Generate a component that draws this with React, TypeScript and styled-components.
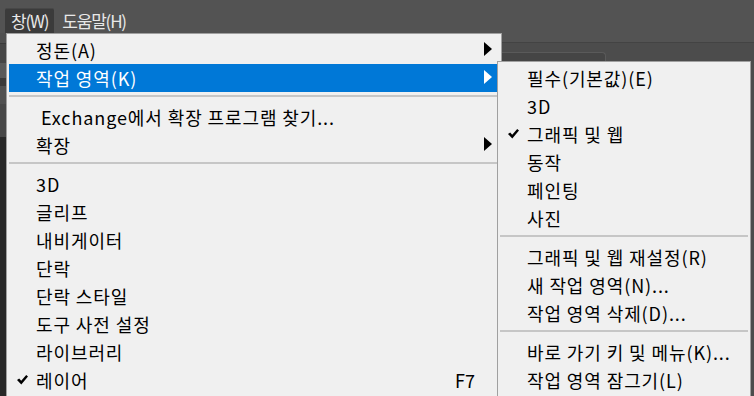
import React from "react";
import styled, { createGlobalStyle } from "styled-components";

const Global = createGlobalStyle`
  html, body { margin: 0; padding: 0; }
  body {
    background: #535353;
    font-family: "Noto Sans CJK KR", "Noto Sans", sans-serif;
    width: 754px;
    height: 396px;
    overflow: hidden;
  }
`;

const Page = styled.div`
  position: relative;
  width: 754px;
  height: 396px;
  display: grid;
  grid-template-rows: 33px 1fr;
  overflow: hidden;
`;

const TopBar = styled.div`
  display: flex;
  align-items: flex-end;
  gap: 2px;
  padding-left: 5px;
  background: #535353;
`;

const TopButton = styled.div<{ $active?: boolean }>`
  height: 25px;
  display: flex;
  align-items: center;
  padding: 0 6px 1px;
  box-sizing: border-box;
  font-size: 17px;
  letter-spacing: -1.2px;
  color: #e8e8e8;
  background: ${(p) => (p.$active ? "#3b3b3b" : "transparent")};
  border-top: 1px solid ${(p) => (p.$active ? "#474747" : "transparent")};
  border-radius: 2px 2px 0 0;
`;

const Workspace = styled.div`
  display: grid;
  grid-template-columns: 6px 1fr;
`;

const LeftStrip = styled.div`
  display: flex;
  flex-direction: column;
`;

const StripBlock = styled.div<{ $h: number; $c: string }>`
  height: ${(p) => p.$h}px;
  background: ${(p) => p.$c};
  flex: ${(p) => (p.$h === 0 ? 1 : "none")};
`;

const MainArea = styled.div`
  display: flex;
  flex-direction: column;
`;

const HeaderBand = styled.div`
  height: 9px;
  background: #535353;
  border-bottom: 1px solid #434343;
`;

const PanelBar = styled.div`
  height: 9px;
  background: #4c4c4c;
`;

const TabRow = styled.div`
  flex: 1;
  background: #4c4c4c;
  padding-left: 488px;
`;

const Tab = styled.div`
  width: 110px;
  height: 40px;
  background: #454545;
  border: 1px solid #5a5a5a;
  border-bottom: none;
  border-radius: 0 4px 0 0;
`;

const Menu = styled.div<{ $left: number; $top: number; $width: number }>`
  position: absolute;
  left: ${(p) => p.$left}px;
  top: ${(p) => p.$top}px;
  width: ${(p) => p.$width}px;
  box-sizing: border-box;
  background: #f0f0f0;
  border: 1px solid #a0a0a0;
  padding: 2px 2px 4px;
`;

const Item = styled.div<{ $active?: boolean }>`
  display: grid;
  grid-template-columns: 27px 1fr auto 17px;
  align-items: center;
  height: 28px;
  padding-right: 7px;
  font-size: 18px;
  letter-spacing: 0.9px;
  white-space: nowrap;
  background: ${(p) => (p.$active ? "#0078d7" : "transparent")};
  color: ${(p) => (p.$active ? "#ffffff" : "#000000")};
`;

const CheckCell = styled.div`
  display: flex;
  align-items: center;
  padding-left: 8px;
  height: 100%;
`;

const Label = styled.span`
  line-height: 28px;
`;

const Shortcut = styled.span`
  line-height: 28px;
  letter-spacing: 0;
`;

const ArrowCell = styled.div`
  display: flex;
  justify-content: flex-end;
  align-items: center;
  padding-bottom: 3px;
  height: 100%;
  box-sizing: border-box;
`;

const Separator = styled.div`
  height: 2px;
  margin: 3px 0 6px;
  background: #c6c6c6;
`;

const Check = () => (
  <svg width="11" height="10" viewBox="0 0 11 10">
    <polygon points="0,5 2.2,3.4 4.2,5.8 9.2,0 11,1.4 4.3,9.6" fill="#000" />
  </svg>
);

const Arrow = ({ color }: { color: string }) => (
  <svg width="8" height="14" viewBox="0 0 8 14">
    <polygon points="0,0 8,7 0,14" fill={color} />
  </svg>
);

type Entry =
  | { sep: true }
  | {
      sep?: false;
      label: string;
      checked?: boolean;
      sub?: boolean;
      active?: boolean;
      shortcut?: string;
    };

const mainItems: Entry[] = [
  { label: "정돈(A)", sub: true },
  { label: "작업 영역(K)", sub: true, active: true },
  { sep: true },
  { label: "\u00a0Exchange에서 확장 프로그램 찾기..." },
  { label: "확장", sub: true },
  { sep: true },
  { label: "3D" },
  { label: "글리프" },
  { label: "내비게이터" },
  { label: "단락" },
  { label: "단락 스타일" },
  { label: "도구 사전 설정" },
  { label: "라이브러리" },
  { label: "레이어", checked: true, shortcut: "F7" },
];

const subItems: Entry[] = [
  { label: "필수(기본값)(E)" },
  { label: "3D" },
  { label: "그래픽 및 웹", checked: true },
  { label: "동작" },
  { label: "페인팅" },
  { label: "사진" },
  { sep: true },
  { label: "그래픽 및 웹 재설정(R)" },
  { label: "새 작업 영역(N)..." },
  { label: "작업 영역 삭제(D)..." },
  { sep: true },
  { label: "바로 가기 키 및 메뉴(K)..." },
  { label: "작업 영역 잠그기(L)" },
];

const MenuList = ({ items }: { items: Entry[] }) => (
  <>
    {items.map((it, i) =>
      it.sep ? (
        <Separator key={i} />
      ) : (
        <Item key={i} $active={it.active}>
          <CheckCell>{it.checked && <Check />}</CheckCell>
          <Label>{it.label}</Label>
          <Shortcut>{it.shortcut}</Shortcut>
          <ArrowCell>
            {it.sub && <Arrow color={it.active ? "#ffffff" : "#000000"} />}
          </ArrowCell>
        </Item>
      )
    )}
  </>
);

export default function App() {
  return (
    <>
      <Global />
      <Page>
        <TopBar>
          <TopButton $active>창(W)</TopButton>
          <TopButton>도움말(H)</TopButton>
        </TopBar>
        <Workspace>
          <LeftStrip>
            <StripBlock $h={10} $c="#4f4f4f" />
            <StripBlock $h={1} $c="#3a3a3a" />
            <StripBlock $h={19} $c="#464646" />
            <StripBlock $h={15} $c="#5a5a5a" />
            <StripBlock $h={8} $c="#3a3a3a" />
            <StripBlock $h={18} $c="#505050" />
            <StripBlock $h={33} $c="#474747" />
            <StripBlock $h={0} $c="#282828" />
          </LeftStrip>
          <MainArea>
            <HeaderBand />
            <PanelBar />
            <TabRow>
              <Tab />
            </TabRow>
          </MainArea>
        </Workspace>
        <Menu $left={6} $top={33} $width={496}>
          <MenuList items={mainItems} />
        </Menu>
        <Menu $left={497} $top={61} $width={254}>
          <MenuList items={subItems} />
        </Menu>
      </Page>
    </>
  );
}
